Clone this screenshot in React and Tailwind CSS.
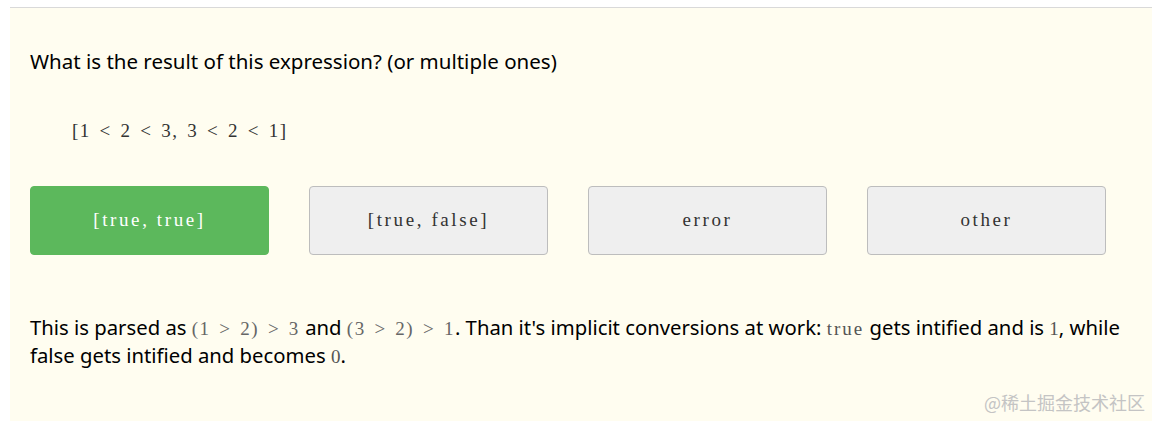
import React from 'react';

const options = [
  { label: '[true, true]', correct: true },
  { label: '[true, false]' },
  { label: 'error' },
  { label: 'other' },
];

export default function App() {
  return (
    <div className="relative h-[421px] w-[1152px] overflow-hidden bg-white pt-[7px] pl-[10px]">
      <div className="h-full border-t border-[#d9d9d9] bg-[#fffdf0] pl-5 pr-[10px] pt-[40px] font-['Noto_Sans',sans-serif] text-black">
        <p className="text-[20.5px] leading-[26px]">What is the result of this expression? (or multiple ones)</p>

        <pre className="mt-[44px] pl-[42px] font-['Liberation_Serif',serif] text-[19px] leading-[26px] tracking-[1.5px] text-[#333] [word-spacing:2.5px]">
          [1 &lt; 2 &lt; 3, 3 &lt; 2 &lt; 1]
        </pre>

        <div className="mt-[42px] flex gap-[40px]">
          {options.map((o) => (
            <button
              key={o.label}
              className={`flex h-[69px] w-[239px] items-center justify-center rounded-[4px] border font-['Liberation_Serif',serif] text-[19px] tracking-[2.6px] ${
                o.correct
                  ? 'border-[#5cb85c] bg-[#5cb85c] text-white'
                  : 'border-[#bdbdbd] bg-[#efefef] text-[#333]'
              }`}
            >
              {o.label}
            </button>
          ))}
        </div>

        <p className="mt-[59px] text-[20.3px] leading-[26px]">
          This is parsed as{' '}
          <code className="whitespace-nowrap font-['Liberation_Serif',serif] text-[19px] tracking-[1.5px] text-[#666] [word-spacing:2.5px]">
            (1 &gt; 2) &gt; 3
          </code>{' '}
          and{' '}
          <code className="whitespace-nowrap font-['Liberation_Serif',serif] text-[19px] tracking-[1.5px] text-[#666] [word-spacing:2.5px]">
            (3 &gt; 2) &gt; 1
          </code>
          . Than it's implicit conversions at work:{' '}
          <code className="font-['Liberation_Serif',serif] text-[19px] tracking-[2px] text-[#555]">true</code> gets
          intified and is <code className="font-['Liberation_Serif',serif] text-[19px] text-[#555]">1</code>, while
          false gets intified and becomes{' '}
          <code className="font-['Liberation_Serif',serif] text-[19px] text-[#555]">0</code>.
        </p>
      </div>

      <span className="absolute bottom-[5px] right-[7px] font-['Noto_Sans_CJK_SC',sans-serif] text-[18px] text-[#c4c4c4]">
        @稀土掘金技术社区
      </span>
    </div>
  );
}
